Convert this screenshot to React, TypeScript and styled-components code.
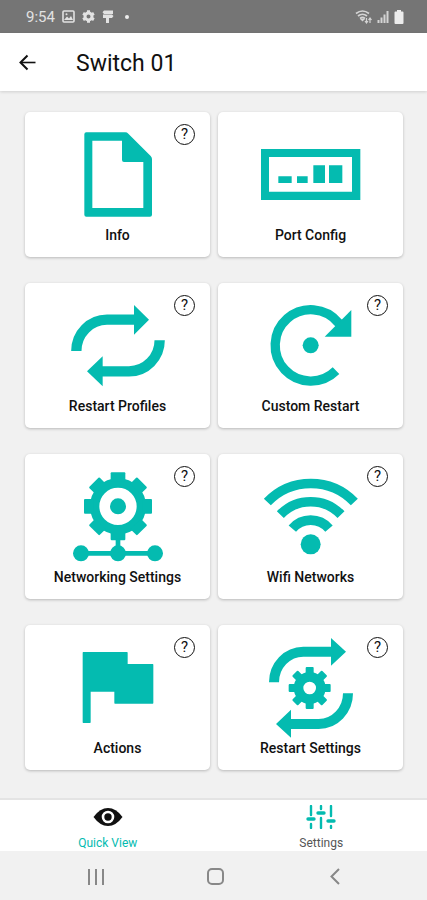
import React, { useState } from "react";
import styled, { createGlobalStyle } from "styled-components";

const TEAL = "#04bbb0";

const GlobalStyle = createGlobalStyle`
  *, *::before, *::after { box-sizing: border-box; }
  body { margin: 0; background: #f1f1f1; font-family: Roboto, "Noto Sans", sans-serif; color: #111; }
  button { font: inherit; color: inherit; border: 0; padding: 0; background: none; cursor: pointer; }
  svg { display: block; }
  h1 { margin: 0; }
`;

const Screen = styled.div`
  display: flex;
  flex-direction: column;
  min-height: 100vh;
`;

const StatusBar = styled.div`
  display: flex;
  align-items: center;
  justify-content: space-between;
  height: 33px;
  padding: 0 23px 0 26px;
  background: #757575;
  color: #e2e2e2;
  font-size: 15px;
`;

const StatusGroup = styled.div<{ $gap: number }>`
  display: flex;
  align-items: center;
  gap: ${(p) => p.$gap}px;
`;

const AppBar = styled.header`
  display: flex;
  align-items: center;
  gap: 38px;
  height: 58px;
  padding: 2px 18px 0;
  background: #fff;
  box-shadow: 0 1px 3px rgba(0, 0, 0, 0.14);
`;

const BackButton = styled.button`
  width: 20px;
  height: 20px;
`;

const Title = styled.h1`
  padding-top: 2px;
  font-size: 23px;
  font-weight: 400;
  line-height: 28px;
`;

const Main = styled.main`
  flex: 1;
  display: grid;
  grid-template-columns: 1fr 1fr;
  align-content: start;
  gap: 26px 8px;
  padding: 21px 24px 28px 25px;
`;

const Card = styled.section`
  position: relative;
  border-radius: 5px;
  background: #fff;
  box-shadow: 0 1px 3px rgba(0, 0, 0, 0.24);
`;

const Tile = styled.button`
  display: flex;
  flex-direction: column;
  align-items: center;
  width: 100%;
  padding: 8px 0 15px;
`;

const TileLabel = styled.span`
  font-size: 14px;
  font-weight: 500;
  line-height: 14px;
`;

const HelpButton = styled.button`
  position: absolute;
  top: 12px;
  right: 15px;
  width: 21px;
  height: 21px;
  border: 1px solid #111;
  border-radius: 50%;
  font-size: 15px;
  line-height: 19px;
  text-align: center;
`;

const TabBar = styled.nav`
  display: grid;
  grid-template-columns: 1fr 1fr;
  height: 53px;
  border-top: 2px solid #e4e4e4;
  background: #fff;
`;

const Tab = styled.button<{ $active: boolean }>`
  display: flex;
  flex-direction: column;
  align-items: center;
  gap: 7px;
  padding: 5px 0 0 2px;
  font-size: 12px;
  line-height: 14px;
  color: ${(p) => (p.$active ? TEAL : "#555")};
`;

const SystemNav = styled.nav`
  display: grid;
  grid-template-columns: repeat(3, 1fr);
  height: 49px;
  padding: 2px 32px 0 36px;
  background: #f1f1f1;
`;

const SystemButton = styled.button`
  display: flex;
  align-items: center;
  justify-content: center;
`;

type GearProps = { cx: number; cy: number; body: number; outer: number; tooth: number; hole: number };

const Gear = ({ cx, cy, body, outer, tooth, hole }: GearProps) => (
  <g fill={TEAL}>
    <circle cx={cx} cy={cy} r={(body + hole) / 2} fill="none" stroke={TEAL} strokeWidth={body - hole} />
    {Array.from({ length: 8 }, (_, i) => (
      <rect
        key={i}
        x={cx - tooth}
        y={cy - outer}
        width={tooth * 2}
        height={outer - body + 10}
        rx="3"
        transform={`rotate(${i * 45} ${cx} ${cy})`}
      />
    ))}
  </g>
);

const Glyph = ({ box, children }: { box: string; children: React.ReactNode }) => (
  <svg width="111" height="108" viewBox={`${box} 333 324`} fill={TEAL} aria-hidden="true">
    {children}
  </svg>
);

const tiles: { label: string; help: boolean; icon: React.ReactNode }[] = [
  {
    label: "Info",
    help: true,
    icon: (
      <Glyph box="141 60">
        <path
          fillRule="evenodd"
          d="M214 97H331Q336 97 340 101L407 168Q411 172 411 177V344Q411 350 405 350H214Q208 350 208 344V103Q208 97 214 97ZM232 122V324H385V186H327Q321 186 321 180V122Z"
        />
      </Glyph>
    ),
  },
  {
    label: "Port Config",
    help: false,
    icon: (
      <Glyph box="126 60">
        <path fillRule="evenodd" d="M144 147H442V300H144ZM168 171V275H417V171Z" />
        <path d="M196 229h40v20h-40zM252 229h32v20h-32zM301 196h35v53h-35zM348 196h40v53h-40z" />
      </Glyph>
    ),
  },
  {
    label: "Restart Profiles",
    help: true,
    icon: (
      <Glyph box="141 48">
        <path d="M184 228A92 94 0 0 1 276 134H360M434 196A92 93 0 0 1 342 289H260" fill="none" stroke={TEAL} strokeWidth="31" />
        <path d="M357 90L402 134L357 179ZM263 244L216 289L263 334Z" />
      </Glyph>
    ),
  },
  {
    label: "Custom Restart",
    help: true,
    icon: (
      <Glyph box="126 48">
        <path d="M369 287A107 107 0 1 1 376 143L388 156" fill="none" stroke={TEAL} strokeWidth="28" />
        <path d="M415 105V185H335Z" />
        <circle cx="293" cy="211" r="24" />
      </Glyph>
    ),
  },
  {
    label: "Networking Settings",
    help: true,
    icon: (
      <Glyph box="141 51">
        <Gear cx={309} cy={184} body={84} outer={102} tooth={22} hole={56} />
        <circle cx="309" cy="184" r="24" />
        <path d="M309 280V325M198 325H420" stroke={TEAL} strokeWidth="14" />
        <circle cx="198" cy="325" r="24" />
        <circle cx="309" cy="325" r="24" />
        <circle cx="420" cy="325" r="24" />
      </Glyph>
    ),
  },
  {
    label: "Wifi Networks",
    help: true,
    icon: (
      <Glyph box="126 51">
        <path
          d="M163 171A181 181 0 0 1 424 171M202 209A126 126 0 0 1 384 209M238 251A72 72 0 0 1 348 251"
          fill="none"
          stroke={TEAL}
          strokeWidth="29"
        />
        <circle cx="293" cy="298" r="30" />
      </Glyph>
    ),
  },
  {
    label: "Actions",
    help: true,
    icon: (
      <Glyph box="141 45">
        <path
          d="M205 104H336V140H413V255H300V219H225V313H205Z"
          stroke={TEAL}
          strokeWidth="4"
          strokeLinejoin="round"
        />
      </Glyph>
    ),
  },
  {
    label: "Restart Settings",
    help: true,
    icon: (
      <Glyph box="126 45">
        <path d="M183 193A88 92 0 0 1 271 101H357M405 226A88 92 0 0 1 317 318H231" fill="none" stroke={TEAL} strokeWidth="30" />
        <path d="M354 60L399 101L354 143ZM234 275L189 318L234 359Z" />
        <Gear cx={290} cy={210} body={48} outer={63} tooth={12} hole={19} />
      </Glyph>
    ),
  },
];

const PictureIcon = () => (
  <svg width="13" height="13" viewBox="0 0 13 13" aria-hidden="true">
    <rect x="1" y="1" width="11" height="11" rx="1" fill="none" stroke="#e2e2e2" strokeWidth="1.6" />
    <path d="M2 10L5 6.5L7 8.5L9 6L11 10Z" fill="#e2e2e2" />
    <circle cx="4.5" cy="4.3" r="1" fill="#e2e2e2" />
  </svg>
);

const CogIcon = () => (
  <svg width="13" height="13" viewBox="0 0 26 26" aria-hidden="true">
    <circle cx="13" cy="13" r="7" fill="none" stroke="#e2e2e2" strokeWidth="6" />
    {[0, 60, 120].map((a) => (
      <path key={a} d="M10 0.5h6v5h-6zM10 20.5h6v5h-6z" fill="#e2e2e2" transform={`rotate(${a} 13 13)`} />
    ))}
  </svg>
);

const SignIcon = () => (
  <svg width="12" height="13" viewBox="0 0 12 13" fill="#e2e2e2" aria-hidden="true">
    <path d="M2 0.5H11V4H2L0.5 2.2ZM1 4.5H10L11.5 6L10 8H1ZM4 8H7V13H4Z" />
  </svg>
);

const WifiStatusIcon = () => (
  <svg width="17" height="14" viewBox="0 0 17 14" fill="none" stroke="#d4d4d4" strokeWidth="1.7" aria-hidden="true">
    <path d="M1 3.5Q7.5 -1.5 14 3.5M3 6Q7.5 2.5 12 6M5 8.5Q7.5 6.5 10 8.5" />
    <path d="M7.5 11.5L5 9H10Z" fill="#d4d4d4" stroke="none" />
    <path d="M11.5 8V12.5M10 11L11.5 13L13 11M15 13V8.5M13.5 10L15 8L16.5 10" strokeWidth="1.2" />
  </svg>
);

const SignalIcon = () => (
  <svg width="12" height="13" viewBox="0 0 12 13" fill="#d4d4d4" aria-hidden="true">
    <path d="M0.5 10h2v3h-2zM3.5 7.5h2v5.5h-2zM6.5 4.5h2v8.5h-2zM9.5 1h2v12h-2z" />
  </svg>
);

const BatteryIcon = () => (
  <svg width="10" height="14" viewBox="0 0 10 14" fill="#ececec" aria-hidden="true">
    <path d="M3 0H7V1.5H8.5Q9.5 1.5 9.5 2.5V13Q9.5 14 8.5 14H1.5Q0.5 14 0.5 13V2.5Q0.5 1.5 1.5 1.5H3Z" />
  </svg>
);

const EyeIcon = () => (
  <svg width="30" height="24" viewBox="0 0 30 24" aria-hidden="true">
    <path d="M0.5 12Q7 3 15 3T29.5 12Q23 21 15 21T0.5 12Z" fill="#111" />
    <circle cx="15" cy="12" r="5" fill="none" stroke="#fff" strokeWidth="2.6" />
  </svg>
);

const SlidersIcon = () => (
  <svg width="30" height="24" viewBox="0 0 30 24" stroke={TEAL} strokeLinecap="round" aria-hidden="true">
    <path d="M5 1V10M5 19V23M15 1V4M15 13V23M25 1V11M25 21V23" strokeWidth="2.4" />
    <path d="M2 14H8M12 8H18M22 16H28" strokeWidth="3.4" />
  </svg>
);

export default function App() {
  const [tab, setTab] = useState("Quick View");
  return (
    <>
      <GlobalStyle />
      <Screen>
        <StatusBar>
          <StatusGroup $gap={7}>
            <span>9:54</span>
            <PictureIcon />
            <CogIcon />
            <SignIcon />
            <svg width="14" height="4" viewBox="0 0 14 4" aria-hidden="true">
              <circle cx="6" cy="2" r="2" fill="#ececec" />
            </svg>
          </StatusGroup>
          <StatusGroup $gap={5}>
            <WifiStatusIcon />
            <SignalIcon />
            <BatteryIcon />
          </StatusGroup>
        </StatusBar>
        <AppBar>
          <BackButton aria-label="Back">
            <svg width="20" height="20" viewBox="0 0 20 20" fill="none" stroke="#111" strokeWidth="2" aria-hidden="true">
              <path d="M9.5 2.5L2.5 9.5L9.5 16.5" />
              <path d="M3 9.5H17.5" strokeWidth="1.6" />
            </svg>
          </BackButton>
          <Title>Switch 01</Title>
        </AppBar>
        <Main>
          {tiles.map((t) => (
            <Card key={t.label}>
              <Tile>
                {t.icon}
                <TileLabel>{t.label}</TileLabel>
              </Tile>
              {t.help && <HelpButton aria-label={`Help: ${t.label}`}>?</HelpButton>}
            </Card>
          ))}
        </Main>
        <TabBar>
          <Tab $active={tab === "Quick View"} onClick={() => setTab("Quick View")}>
            <EyeIcon />
            Quick View
          </Tab>
          <Tab $active={tab === "Settings"} onClick={() => setTab("Settings")}>
            <SlidersIcon />
            Settings
          </Tab>
        </TabBar>
        <SystemNav>
          <SystemButton aria-label="Recent apps">
            <svg width="18" height="16" viewBox="0 0 18 16" stroke="#888" strokeWidth="2" aria-hidden="true">
              <path d="M2 0V16M9 0V16M16 0V16" />
            </svg>
          </SystemButton>
          <SystemButton aria-label="Home">
            <svg width="17" height="17" viewBox="0 0 17 17" fill="none" stroke="#888" strokeWidth="2" aria-hidden="true">
              <rect x="1" y="1" width="15" height="15" rx="4" />
            </svg>
          </SystemButton>
          <SystemButton aria-label="Back">
            <svg width="10" height="17" viewBox="0 0 10 17" fill="none" stroke="#888" strokeWidth="2" aria-hidden="true">
              <path d="M9 1L1.5 8.5L9 16" />
            </svg>
          </SystemButton>
        </SystemNav>
      </Screen>
    </>
  );
}
